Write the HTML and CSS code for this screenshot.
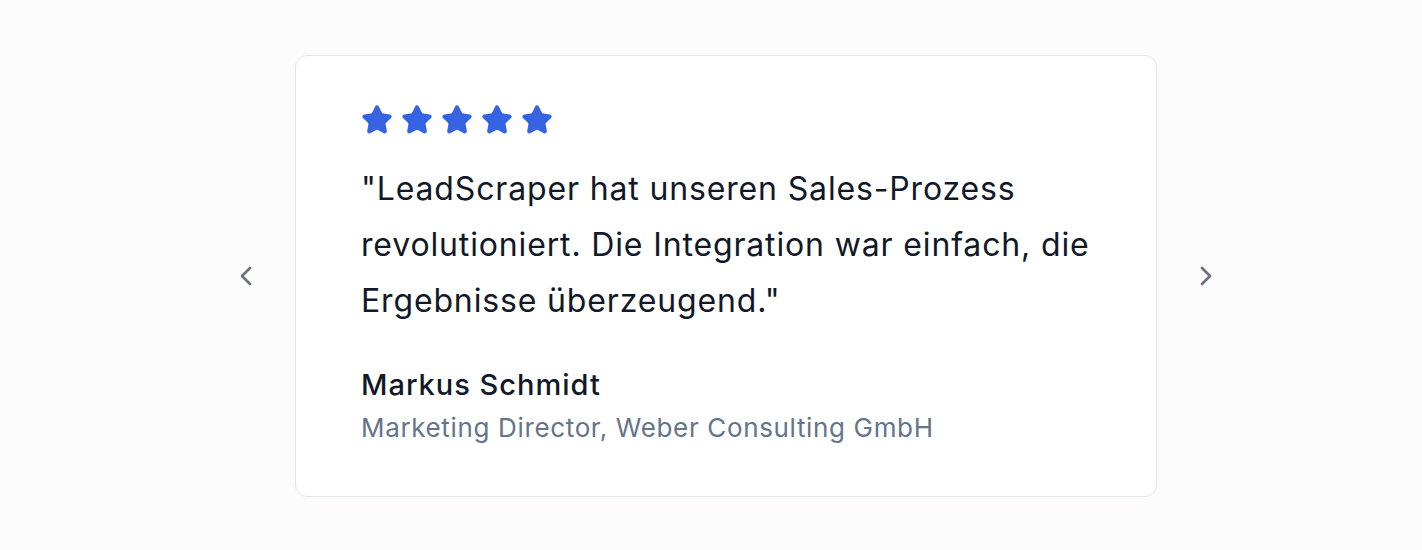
FILE: index.html
```html
<!DOCTYPE html>
<html lang="de">
<head>
<meta charset="utf-8">
<link rel="stylesheet" href="styles.css">
</head>
<body>
<div class="page">
  <div class="carousel">
    <button class="nav" aria-label="Zurück">
      <svg width="32" height="32" viewBox="0 0 24 24" fill="none" stroke="currentColor" stroke-width="2" stroke-linecap="round" stroke-linejoin="round"><path d="m15 18-6-6 6-6"/></svg>
    </button>
    <div class="card">
      <div class="stars">
        <svg width="32" height="32" viewBox="0 0 24 24"><path d="M11.525 2.295a.53.53 0 0 1 .95 0l2.31 4.679a2.123 2.123 0 0 0 1.595 1.16l5.166.756a.53.53 0 0 1 .294.904l-3.736 3.638a2.123 2.123 0 0 0-.611 1.878l.882 5.14a.53.53 0 0 1-.771.56l-4.618-2.428a2.122 2.122 0 0 0-1.973 0L6.396 21.01a.53.53 0 0 1-.77-.56l.881-5.139a2.122 2.122 0 0 0-.611-1.879L2.16 9.795a.53.53 0 0 1 .294-.906l5.165-.755a2.122 2.122 0 0 0 1.597-1.160z"/></svg>
        <svg width="32" height="32" viewBox="0 0 24 24"><path d="M11.525 2.295a.53.53 0 0 1 .95 0l2.31 4.679a2.123 2.123 0 0 0 1.595 1.16l5.166.756a.53.53 0 0 1 .294.904l-3.736 3.638a2.123 2.123 0 0 0-.611 1.878l.882 5.14a.53.53 0 0 1-.771.56l-4.618-2.428a2.122 2.122 0 0 0-1.973 0L6.396 21.01a.53.53 0 0 1-.77-.56l.881-5.139a2.122 2.122 0 0 0-.611-1.879L2.16 9.795a.53.53 0 0 1 .294-.906l5.165-.755a2.122 2.122 0 0 0 1.597-1.160z"/></svg>
        <svg width="32" height="32" viewBox="0 0 24 24"><path d="M11.525 2.295a.53.53 0 0 1 .95 0l2.31 4.679a2.123 2.123 0 0 0 1.595 1.16l5.166.756a.53.53 0 0 1 .294.904l-3.736 3.638a2.123 2.123 0 0 0-.611 1.878l.882 5.14a.53.53 0 0 1-.771.56l-4.618-2.428a2.122 2.122 0 0 0-1.973 0L6.396 21.01a.53.53 0 0 1-.77-.56l.881-5.139a2.122 2.122 0 0 0-.611-1.879L2.16 9.795a.53.53 0 0 1 .294-.906l5.165-.755a2.122 2.122 0 0 0 1.597-1.160z"/></svg>
        <svg width="32" height="32" viewBox="0 0 24 24"><path d="M11.525 2.295a.53.53 0 0 1 .95 0l2.31 4.679a2.123 2.123 0 0 0 1.595 1.16l5.166.756a.53.53 0 0 1 .294.904l-3.736 3.638a2.123 2.123 0 0 0-.611 1.878l.882 5.14a.53.53 0 0 1-.771.56l-4.618-2.428a2.122 2.122 0 0 0-1.973 0L6.396 21.01a.53.53 0 0 1-.77-.56l.881-5.139a2.122 2.122 0 0 0-.611-1.879L2.16 9.795a.53.53 0 0 1 .294-.906l5.165-.755a2.122 2.122 0 0 0 1.597-1.160z"/></svg>
        <svg width="32" height="32" viewBox="0 0 24 24"><path d="M11.525 2.295a.53.53 0 0 1 .95 0l2.31 4.679a2.123 2.123 0 0 0 1.595 1.16l5.166.756a.53.53 0 0 1 .294.904l-3.736 3.638a2.123 2.123 0 0 0-.611 1.878l.882 5.14a.53.53 0 0 1-.771.56l-4.618-2.428a2.122 2.122 0 0 0-1.973 0L6.396 21.01a.53.53 0 0 1-.77-.56l.881-5.139a2.122 2.122 0 0 0-.611-1.879L2.16 9.795a.53.53 0 0 1 .294-.906l5.165-.755a2.122 2.122 0 0 0 1.597-1.160z"/></svg>
      </div>
      <p class="quote">"LeadScraper hat unseren Sales-Prozess revolutioniert. Die Integration war einfach, die Ergebnisse überzeugend."</p>
      <p class="name">Markus Schmidt</p>
      <p class="role">Marketing Director, Weber Consulting GmbH</p>
    </div>
    <button class="nav" aria-label="Weiter">
      <svg width="32" height="32" viewBox="0 0 24 24" fill="none" stroke="currentColor" stroke-width="2" stroke-linecap="round" stroke-linejoin="round"><path d="m9 18 6-6-6-6"/></svg>
    </button>
  </div>
</div>
</body>
</html>
```
FILE: styles.css
```css
* { box-sizing: border-box; }
html, body { margin: 0; padding: 0; }
body {
  background: #fcfcfd;
  font-family: Inter, "Noto Sans", sans-serif;
  color: #0f172a;
}
.page {
  height: 550px;
  display: flex;
  align-items: flex-start;
  justify-content: center;
  padding-top: 55px;
  padding-left: 30px;
}
.carousel {
  display: flex;
  align-items: center;
  gap: 25px;
}
.nav {
  width: 48px;
  height: 48px;
  padding: 8px;
  border: 0;
  background: transparent;
  color: #6b7280;
  display: flex;
  align-items: center;
  justify-content: center;
}
.nav svg { display: block; }
.card {
  width: 862px;
  background: #fff;
  border: 1px solid #e2e6ee;
  border-radius: 12px;
  padding: 48px 60px 49px 65px;
}
.stars {
  display: flex;
  gap: 8px;
  margin-bottom: 25px;
}
.stars svg {
  display: block;
  fill: #3563e3;
  stroke: #3563e3;
  stroke-width: 2;
  stroke-linejoin: round;
}
.quote {
  margin: 0 0 38px;
  font-size: 32px;
  line-height: 56px;
  letter-spacing: 0.85px;
  color: #111827;
}
.name {
  margin: 0 0 6px;
  font-size: 29px;
  line-height: 36px;
  font-weight: 500;
  letter-spacing: 1px;
  color: #111827;
}
.role {
  margin: 0;
  font-size: 26px;
  line-height: 38px;
  letter-spacing: 0.65px;
  color: #64748b;
}
```
